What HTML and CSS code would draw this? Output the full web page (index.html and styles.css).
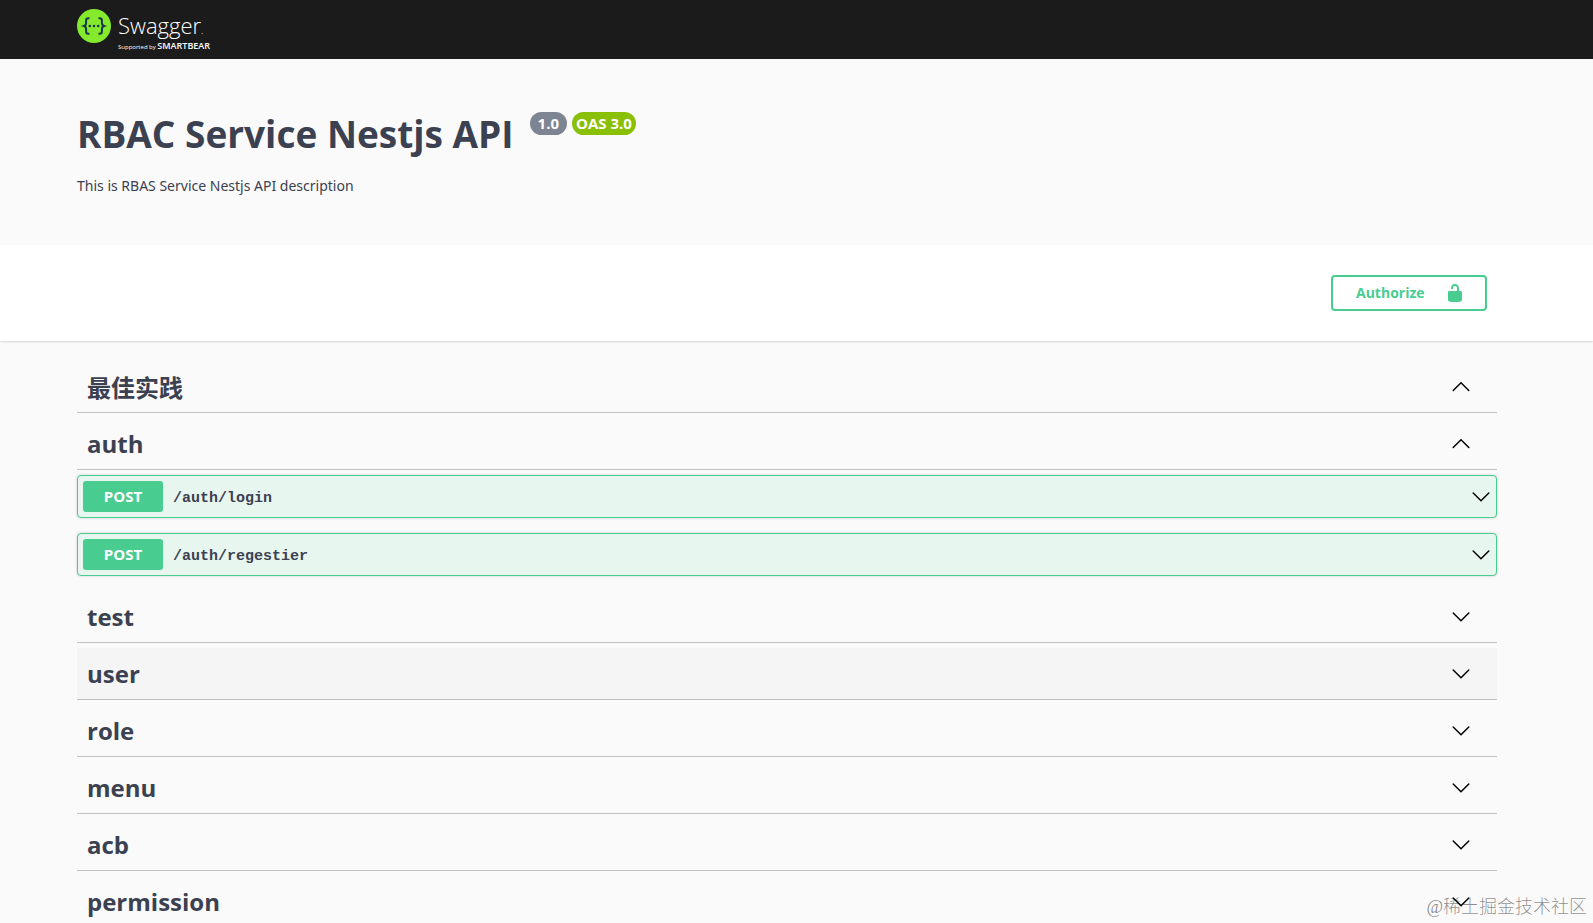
FILE: index.html
```html
<!doctype html>
<html lang="en">
<head>
<meta charset="utf-8">
<title>Swagger UI</title>
<link rel="stylesheet" href="styles.css">
</head>

<body>
<!-- icons -->
<svg class="defs" aria-hidden="true">
	<symbol id="arrow-down" viewBox="0 0 20 20"><path d="M2.2 6 10 13.8 17.8 6" fill="none" stroke="#000" stroke-width="1.5" stroke-linecap="round"/></symbol>
	<symbol id="arrow-up" viewBox="0 0 20 20"><path d="M2.2 13.5 10 5.7l7.8 7.8" fill="none" stroke="#000" stroke-width="1.5" stroke-linecap="round"/></symbol>
	<symbol id="unlocked" viewBox="0 0 20 20"><path d="M15.8 8H14V5.6C14 2.703 12.665 1 10 1 7.334 1 6 2.703 6 5.6V6h2v-.801C8 3.754 8.797 3 10 3c1.203 0 2 .754 2 2.199V8H4c-.553 0-1 .646-1 1.199V17c0 .549.428 1.139.951 1.307l1.197.387C5.672 18.861 6.55 19 7.1 19h5.8c.549 0 1.428-.139 1.951-.307l1.196-.387c.524-.167.953-.757.953-1.306V9.199C17 8.646 16.352 8 15.8 8z" fill="currentColor"/></symbol>
</svg>

<header class="topbar">
	<div class="wrapper">
		<a class="logo" href="#">
			<svg width="34" height="34" viewBox="0 0 34 34" aria-hidden="true">
				<circle cx="17" cy="17" r="17" fill="#85ea2d"/>
				<g fill="none" stroke="#173647" stroke-width="2">
					<path d="M12.5 9.2h-1.2c-1.5 0-2.2.8-2.2 2.2v2.4c0 1.8-.6 2.7-2.1 3.2 1.5.5 2.1 1.4 2.1 3.2v2.4c0 1.4.7 2.2 2.2 2.2h1.2"/>
					<path d="M21.5 9.2h1.2c1.5 0 2.2.8 2.2 2.2v2.4c0 1.8.6 2.7 2.1 3.2-1.5.5-2.1 1.4-2.1 3.2v2.4c0 1.4-.7 2.2-2.2 2.2h-1.2"/>
				</g>
				<g fill="#173647"><circle cx="12.8" cy="17" r="1.3"/><circle cx="17" cy="17" r="1.3"/><circle cx="21.2" cy="17" r="1.3"/></g>
			</svg>
			<span class="logo-text">
				<span class="logo-name">Swagger<small>.</small></span>
				<span class="logo-by">Supported by <b>SMARTBEAR</b></span>
			</span>
		</a>
	</div>
</header>

<section class="info">
	<div class="wrapper">
		<h1 class="title">RBAC Service Nestjs API <span class="badges"><span class="version">1.0</span><span class="version oas">OAS 3.0</span></span></h1>
		<p>This is RBAS Service Nestjs API description</p>
	</div>
</section>

<section class="scheme">
	<div class="wrapper">
		<button class="authorize" type="button"><span>Authorize</span><svg width="20" height="20"><use href="#unlocked"/></svg></button>
	</div>
</section>

<main class="wrapper tags">
	<button class="tag" type="button"><span>最佳实践</span><svg width="20" height="20"><use href="#arrow-up"/></svg></button>
	<button class="tag" type="button"><span>auth</span><svg width="20" height="20"><use href="#arrow-up"/></svg></button>
	<button class="opblock" type="button"><span class="method">POST</span><span class="path">/auth/login</span><svg width="20" height="20"><use href="#arrow-down"/></svg></button>
	<button class="opblock" type="button"><span class="method">POST</span><span class="path">/auth/regestier</span><svg width="20" height="20"><use href="#arrow-down"/></svg></button>
	<button class="tag" type="button"><span>test</span><svg width="20" height="20"><use href="#arrow-down"/></svg></button>
	<button class="tag active" type="button"><span>user</span><svg width="20" height="20"><use href="#arrow-down"/></svg></button>
	<button class="tag" type="button"><span>role</span><svg width="20" height="20"><use href="#arrow-down"/></svg></button>
	<button class="tag" type="button"><span>menu</span><svg width="20" height="20"><use href="#arrow-down"/></svg></button>
	<button class="tag" type="button"><span>acb</span><svg width="20" height="20"><use href="#arrow-down"/></svg></button>
	<button class="tag" type="button"><span>permission</span><svg width="20" height="20"><use href="#arrow-down"/></svg></button>
</main>

<div class="watermark">@稀土掘金技术社区</div>
</body>
</html>
```

FILE: styles.css
```css
* {margin:0; padding:0; box-sizing:border-box;}

html {height:100%; overflow:hidden;}
body {height:100%; overflow:hidden; position:relative; background:#fafafa; color:#3b4151; font-family:"Open Sans","Noto Sans CJK SC",sans-serif; font-size:14px;}
button {font-family:inherit; color:inherit; background:none; border:0; cursor:pointer;}
svg {flex:none;}
.defs {position:absolute; width:0; height:0;}

.topbar, .info, .scheme {padding-right:19px;}
.wrapper {width:100%; max-width:1460px; margin:0 auto; padding:0 20px;}

.topbar {height:59px; background:#1b1b1b;}
.logo {display:flex; gap:7px; padding-top:9px; color:#fff; text-decoration:none;}
.logo-text {display:flex; flex-direction:column; padding-top:4px;}
.logo-name {font-size:22px; line-height:24px; font-weight:300;}
.logo-name small {font-size:10px;}
.logo-by {font-size:6px; line-height:8px;}
.logo-by b {font-size:9px; font-weight:600;}

.info {padding-top:50px; padding-bottom:48px;}
.title {display:flex; align-items:flex-start; gap:16px; font-size:37px; line-height:50px; margin-bottom:16px;}
.badges {display:flex; gap:5px; padding-top:3px;}
.version {padding:0 8px; border-radius:12px; background:#7d8492; color:#fff; font-size:15px; line-height:23px;}
.oas {padding:0 4px; background:#89bf04;}
.info p {font-family:"Noto Sans",sans-serif; font-size:14px; line-height:22px;}

.scheme {padding-top:30px; padding-bottom:30px; background:#fff; box-shadow:0 1px 2px rgba(0,0,0,.15);}
.scheme .wrapper {display:flex; justify-content:flex-end; padding-right:30px;}
.authorize {display:flex; align-items:center; justify-content:space-between; width:156px; height:36px; padding:0 20px 1px 23px; border:2px solid #49cc90; border-radius:4px; color:#49cc90; font-size:14px; font-weight:700;}

.tags {max-width:1479px; padding:20px 39px 0 20px;}
.tag {display:flex; align-items:center; justify-content:space-between; width:100%; height:52px; margin-bottom:5px; padding:0 26px 0 10px; border-bottom:1px solid rgba(59,65,81,.3); font-size:24px; font-weight:700;}
.tag.active {background:#f5f5f5;}

.opblock {display:flex; align-items:center; width:100%; height:43px; margin-bottom:15px; padding:0 5px; border:1px solid #49cc90; border-radius:4px; background:#e8f6f0; box-shadow:0 0 3px rgba(0,0,0,.19);}
.method {width:80px; border-radius:3px; background:#49cc90; color:#fff; font-size:15px; font-weight:700; line-height:31px; text-align:center;}
.path {flex:1; padding:4px 10px 0; font-family:"Liberation Mono",monospace; font-size:15px; font-weight:700; text-align:left;}

.watermark {position:absolute; right:6px; bottom:4px; color:rgba(0,0,0,.45); font-family:"Liberation Serif","Noto Sans CJK SC",serif; font-size:18px; font-weight:300; line-height:24px;}
```
